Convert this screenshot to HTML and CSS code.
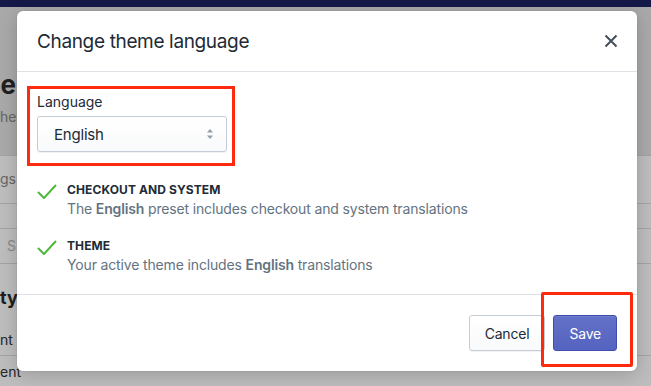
FILE: index.html
```html
<!DOCTYPE html>
<html lang="en">
<head>
    <meta charset="UTF-8">
    <meta name="viewport" content="width=device-width, initial-scale=1.0">
    <title>Change theme language</title>
    <link rel="stylesheet" href="styles.css">
</head>
<body>
    <!-- dimmed page behind the modal, only its left edge shows -->
    <div class="page">
        <div class="topbar"></div>
        <div class="page-head">
            <div class="strip strip-title">e</div>
            <div class="strip strip-sub">he l</div>
        </div>
        <div class="page-row row-settings">
            <div class="strip strip-muted">gs</div>
        </div>
        <div class="page-row row-gap"></div>
        <div class="page-row row-search">
            <div class="strip strip-search">S</div>
        </div>
        <div class="page-row row-section">
            <div class="strip strip-heading">ty</div>
            <div class="strip strip-item">nt</div>
        </div>
        <div class="page-row row-last">
            <div class="strip strip-item">ent</div>
        </div>
    </div>

    <div class="modal">
        <div class="modal-header">
            <h2>Change theme language</h2>
            <button class="close-btn" aria-label="Close">
                <svg width="14" height="14" viewBox="0 0 14 14">
                    <path d="M1.5 1.5 L12.5 12.5 M12.5 1.5 L1.5 12.5" stroke="#454f5b" stroke-width="2" fill="none"/>
                </svg>
            </button>
        </div>

        <div class="modal-body">
            <div class="field highlight">
                <label class="field-label">Language</label>
                <div class="select">
                    <span>English</span>
                    <svg width="8" height="12" viewBox="0 0 8 12">
                        <path d="M4 1 L7 4.5 H1 Z M4 11 L7 7.5 H1 Z" fill="#919eab"/>
                    </svg>
                </div>
            </div>

            <div class="checklist">
                <div class="check-row">
                    <svg class="check" width="20" height="15" viewBox="0 0 20 15">
                        <path d="M1 8 L7 14 L19 1" stroke="#50b83c" stroke-width="2" fill="none"/>
                    </svg>
                    <div>
                        <div class="check-title">Checkout and system</div>
                        <div class="check-desc">The <strong>English</strong> preset includes checkout and system translations</div>
                    </div>
                </div>
                <div class="check-row">
                    <svg class="check" width="20" height="15" viewBox="0 0 20 15">
                        <path d="M1 8 L7 14 L19 1" stroke="#50b83c" stroke-width="2" fill="none"/>
                    </svg>
                    <div>
                        <div class="check-title">Theme</div>
                        <div class="check-desc">Your active theme includes <strong>English</strong> translations</div>
                    </div>
                </div>
            </div>
        </div>

        <div class="modal-footer">
            <button class="btn">Cancel</button>
            <button class="btn btn-primary">Save</button>
        </div>
    </div>

    <div class="mark mark-save"></div>
</body>
</html>
```

FILE: styles.css
```css
body {
    margin: 0;
    font-family: 'Inter', 'Liberation Sans', sans-serif;
    overflow: hidden;
}

/* background page, dimmed */
.page {
    height: 386px;
    background-color: #bdbdbd;
    color: #262626;
}

.topbar {
    height: 7px;
    background-color: #151948;
}

.page-head {
    height: 148px;
    background-color: #a9a9a9;
    box-sizing: border-box;
    padding-top: 62px;
}

.strip {
    display: flex;
    justify-content: flex-end;
    width: 16px;
    white-space: nowrap;
}

.strip-title {
    font-size: 26px;
    font-weight: 700;
    line-height: 32px;
    color: #1f1f1f;
}

.strip-sub {
    justify-content: flex-start;
    margin-top: 6px;
    font-size: 14px;
    line-height: 20px;
    color: #666;
}

.page-row {
    border-bottom: 1px solid #a3a3a3;
    box-sizing: border-box;
}

.row-settings {
    height: 49px;
    border-top: 1px solid #a3a3a3;
    padding-top: 13px;
}

.strip-muted {
    font-size: 14px;
    line-height: 20px;
    color: #666;
}

.row-gap {
    height: 25px;
}

.row-search {
    height: 35px;
    padding-top: 7px;
}

.strip-search {
    font-size: 14px;
    line-height: 20px;
    color: #8a8a8a;
}

.row-section {
    height: 92px;
    padding-top: 22px;
}

.strip-heading {
    justify-content: flex-start;
    font-size: 18px;
    font-weight: 700;
    line-height: 24px;
    color: #1f1f1f;
}

.strip-item {
    justify-content: flex-start;
    margin-top: 20px;
    font-size: 14px;
    line-height: 20px;
}

.row-last {
    border-bottom: none;
    padding-top: 6px;
}

.row-last .strip-item {
    margin-top: 0;
}

/* modal */
.modal {
    position: absolute;
    left: 17px;
    top: 11px;
    width: 620px;
    background-color: #ffffff;
    border-radius: 6px;
    box-shadow: 0 0 0 1px rgba(63, 63, 68, 0.05), 0 4px 18px rgba(0, 0, 0, 0.18);
    color: #212b36;
}

.modal-header {
    display: flex;
    align-items: center;
    justify-content: space-between;
    height: 60px;
    padding: 0 19px 0 20px;
    border-bottom: 1px solid #dfe3e8;
}

.modal-header h2 {
    margin: 0;
    font-size: 19px;
    font-weight: 400;
    letter-spacing: -0.35px;
}

.close-btn {
    display: flex;
    padding: 0;
    border: none;
    background: none;
    cursor: pointer;
}

.modal-body {
    padding: 14px 20px 19px;
}

.field {
    display: flex;
    flex-direction: column;
    width: max-content;
}

.highlight {
    margin-left: -10px;
    border: 3px solid #ff2a0d;
    padding: 3px 5px 11px 7px;
}

.field-label {
    font-size: 14px;
    line-height: 20px;
    margin-bottom: 4px;
}

.select {
    display: flex;
    align-items: center;
    justify-content: space-between;
    width: 190px;
    height: 36px;
    box-sizing: border-box;
    padding: 0 12px 0 16px;
    border: 1px solid #c4cdd5;
    border-radius: 3px;
    background: linear-gradient(180deg, #ffffff, #f9fafb);
    box-shadow: 0 1px 0 rgba(22, 29, 37, 0.05);
    font-size: 15px;
    letter-spacing: -0.2px;
}

.checklist {
    display: flex;
    flex-direction: column;
    gap: 18px;
    margin-top: 15px;
}

.check-row {
    display: flex;
    gap: 10px;
}

.check {
    margin-top: 3px;
    flex-shrink: 0;
}

.check-title {
    font-size: 12px;
    font-weight: 700;
    line-height: 18px;
    text-transform: uppercase;
    letter-spacing: 0.1px;
}

.check-desc {
    font-size: 14px;
    line-height: 20px;
    color: #637381;
    letter-spacing: -0.15px;
}

.check-desc strong {
    font-weight: 600;
}

.modal-footer {
    display: flex;
    justify-content: flex-end;
    gap: 8px;
    padding: 20px;
    border-top: 1px solid #dfe3e8;
}

.btn {
    height: 36px;
    padding: 0 15px;
    border: 1px solid #c4cdd5;
    border-radius: 3px;
    background: linear-gradient(180deg, #ffffff, #f9fafb);
    box-shadow: 0 1px 0 rgba(22, 29, 37, 0.05);
    color: #212b36;
    font-family: inherit;
    font-size: 14px;
    letter-spacing: -0.2px;
    cursor: pointer;
}

.btn-primary {
    border-color: #3f4eae;
    background: linear-gradient(180deg, #6371c7, #5563c1);
    box-shadow: inset 0 1px 0 #6f7bcb;
    color: #ffffff;
}

/* annotation box drawn over the save button */
.mark {
    position: absolute;
    border: 3px solid #ff2a0d;
    border-radius: 2px;
}

.mark-save {
    left: 541px;
    top: 292px;
    width: 86px;
    height: 69px;
}
```
